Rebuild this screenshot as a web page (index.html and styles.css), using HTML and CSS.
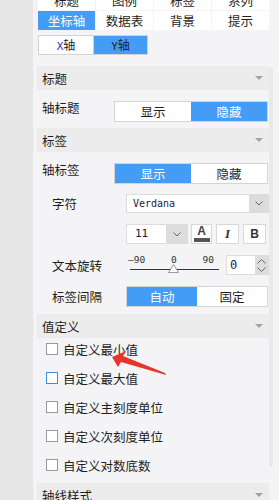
FILE: index.html
```html
<!DOCTYPE html>
<html>
  <head>
    <meta charset="UTF-8">
    <title>坐标轴设置</title>
    <link rel="stylesheet" href="styles.css">
  </head>
  <body>
    <div class="app">
      <div class="side"></div>
      <div class="panel">
        <div class="tabs">
          <span class="tab">标题</span>
          <span class="tab">图例</span>
          <span class="tab">标签</span>
          <span class="tab">系列</span>
          <span class="tab active">坐标轴</span>
          <span class="tab">数据表</span>
          <span class="tab">背景</span>
          <span class="tab">提示</span>
        </div>
        <div class="axis-switch">
          <span class="axis"><b class="latin x">X</b>轴</span>
          <span class="axis on"><b class="latin">Y</b>轴</span>
        </div>

        <div class="group-head">标题<i class="caret"></i></div>
        <div class="row top">
          <span class="label">轴标题</span>
          <div class="toggle">
            <span>显示</span>
            <span class="on">隐藏</span>
          </div>
        </div>

        <div class="group-head tight">标签<i class="caret"></i></div>
        <div class="row top">
          <span class="label">轴标签</span>
          <div class="toggle">
            <span class="on">显示</span>
            <span>隐藏</span>
          </div>
        </div>
        <div class="row sub">
          <span class="label">字符</span>
          <div class="select wide">
            <span class="value latin">Verdana</span>
            <span class="arrow"><svg width="8" height="5" viewBox="0 0 8 5"><path d="M0.5 0.5 L4 4 L7.5 0.5" fill="none" stroke="#666" stroke-width="1"/></svg></span>
          </div>
        </div>
        <div class="row sub">
          <span class="label"></span>
          <div class="select size">
            <span class="value latin">11</span>
            <span class="arrow"><svg width="8" height="5" viewBox="0 0 8 5"><path d="M0.5 0.5 L4 4 L7.5 0.5" fill="none" stroke="#666" stroke-width="1"/></svg></span>
          </div>
          <span class="tool color"><span class="a">A</span><span class="bar"></span></span>
          <span class="tool italic">I</span>
          <span class="tool bold">B</span>
        </div>
        <div class="row sub">
          <span class="label">文本旋转</span>
          <div class="slider">
            <div class="ticks"><span>‒90</span><span>0</span><span>90</span></div>
            <div class="line"></div>
            <svg class="thumb" width="11" height="9" viewBox="0 0 11 9"><polygon points="5.5,0.5 10.5,8.5 0.5,8.5" fill="#fff" stroke="#999"/></svg>
          </div>
          <div class="number">
            <span class="value latin">0</span>
            <span class="spin">
              <svg width="9" height="5" viewBox="0 0 9 5"><path d="M0.5 4.5 L4.5 0.5 L8.5 4.5" fill="none" stroke="#666"/></svg>
              <svg width="9" height="5" viewBox="0 0 9 5"><path d="M0.5 0.5 L4.5 4.5 L8.5 0.5" fill="none" stroke="#666"/></svg>
            </span>
          </div>
        </div>
        <div class="row sub">
          <span class="label">标签间隔</span>
          <div class="toggle long">
            <span class="on">自动</span>
            <span>固定</span>
          </div>
        </div>

        <div class="group-head value-head">值定义<i class="caret"></i></div>
        <div class="checks">
          <label class="check"><span class="box"></span>自定义最小值</label>
          <label class="check"><span class="box focus"></span>自定义最大值</label>
          <label class="check"><span class="box"></span>自定义主刻度单位</label>
          <label class="check"><span class="box"></span>自定义次刻度单位</label>
          <label class="check"><span class="box"></span>自定义对数底数</label>
        </div>

        <div class="group-head last">轴线样式<i class="caret"></i></div>
      </div>
      <div class="scroll"><div class="scroll-thumb"></div></div>

      <svg class="pointer" width="56" height="28" viewBox="0 0 56 28">
        <polygon points="0,6 14,0 11,5 53,22 54,24 9,11 6,16" fill="#e8352c"/>
      </svg>
    </div>
  </body>
</html>
```

FILE: styles.css
```css
html, body {
  margin: 0;
  padding: 0;
}
body {
  font-family: "Noto Sans CJK SC", "Noto Sans", sans-serif;
  font-size: 12px;
  color: #1e1e1e;
}
.app {
  position: relative;
  display: flex;
  width: 279px;
  height: 500px;
  overflow: hidden;
  background: #f4f4f6;
}
.side {
  width: 33px;
  flex: none;
  background: #e6e6e6;
}
.panel {
  width: 232px;
  flex: none;
  padding-left: 4px;
}
.scroll {
  width: 10px;
  flex: none;
}
.scroll-thumb {
  width: 4px;
  height: 400px;
  margin-top: 67px;
  border-radius: 2px;
  background: #e9e9eb;
}
.latin {
  font-family: "DejaVu Sans Mono", "Liberation Mono", monospace;
  font-weight: normal;
}

/* tabs */
.tabs {
  display: grid;
  grid-template-columns: repeat(4, 57px);
  grid-auto-rows: 19px;
  gap: 1px;
  margin: -9px 0 0 1px;
}
.tab {
  background: #fff;
  text-align: center;
  line-height: 19px;
  font-size: 12.5px;
}
.tab.active {
  background: #439cf5;
  color: #fff;
}
.axis-switch {
  display: flex;
  margin: 5px 0 0 1px;
}
.axis {
  width: 54px;
  height: 18px;
  line-height: 18px;
  text-align: center;
  border: 1px solid #d2d2d2;
  background: #fff;
}
.axis + .axis {
  width: 53px;
  border-left: none;
}
.axis.on {
  background: #439cf5;
}
.axis .latin {
  font-size: 11px;
}
.axis .x {
  color: #3a2ad0;
}

/* group headers */
.group-head {
  display: flex;
  align-items: center;
  justify-content: space-between;
  height: 24px;
  margin-top: 11px;
  padding: 0 6px 0 5px;
  background: #ececec;
  font-size: 12.5px;
}
.group-head.tight {
  margin-top: 6px;
}
.group-head.value-head {
  margin-top: 7px;
}
.group-head.last {
  margin-top: 12px;
}
.caret {
  width: 0;
  height: 0;
  border-left: 4px solid transparent;
  border-right: 4px solid transparent;
  border-top: 4px solid #a3a3a3;
}

/* rows */
.row {
  display: flex;
  align-items: center;
  margin-top: 11px;
}
.row.top {
  align-items: flex-start;
  margin-top: 11px;
  padding-left: 5px;
}
.row.top + .row.sub {
  margin-top: 10px;
}
.row.top .label {
  width: 72px;
  line-height: 12px;
  padding-top: 1px;
  font-size: 12.5px;
}
.row.sub {
  padding-left: 15px;
}
.row.sub .label {
  width: 74px;
  flex: none;
  font-size: 12.5px;
}
.toggle {
  display: flex;
  width: 152px;
  height: 19px;
  border: 1px solid #d4d4d4;
  background: #fff;
}
.toggle span {
  flex: 1;
  text-align: center;
  line-height: 19px;
  font-size: 12.5px;
}
.toggle .on {
  background: #439cf5;
  color: #fff;
}
.toggle.long {
  width: 140px;
}

/* selects */
.select {
  display: flex;
  height: 17px;
  border: 1px solid #dcdcdc;
  background: #fff;
}
.select.wide {
  width: 141px;
}
.select.size {
  width: 60px;
  height: 18px;
}
.select .value {
  flex: 1;
  padding-left: 6px;
  line-height: 17px;
  font-size: 10px;
  color: #1a1a40;
}
.select.size .value {
  line-height: 18px;
  padding-left: 8px;
  font-size: 11px;
}
.select .arrow {
  display: flex;
  align-items: center;
  justify-content: center;
  width: 19px;
  background: #dcdcdc;
}
.select.size .arrow {
  width: 21px;
}
.tool {
  display: flex;
  flex-direction: column;
  align-items: center;
  justify-content: center;
  width: 19px;
  height: 18px;
  border: 1px solid #d8d8d8;
  background: #fff;
  margin-left: 4px;
}
.tool.color {
  margin-left: 3px;
  justify-content: flex-end;
}
.tool .a {
  font-family: "Liberation Sans", sans-serif;
  font-weight: bold;
  font-size: 12px;
  line-height: 11px;
  color: #444;
}
.tool .bar {
  width: 16px;
  height: 4px;
  margin: 1px 0 1px;
  background: #555;
}
.tool.italic {
  width: 21px;
  font-family: "Liberation Serif", serif;
  font-style: italic;
  font-weight: bold;
  font-size: 13px;
  color: #333;
}
.tool.bold {
  width: 21px;
  font-family: "Liberation Sans", sans-serif;
  font-weight: bold;
  font-size: 12px;
  color: #333;
}

/* slider */
.slider {
  position: relative;
  width: 91px;
  height: 20px;
  margin-left: 2px;
}
.ticks {
  display: flex;
  justify-content: space-between;
  padding-right: 5px;
  font-family: "DejaVu Sans Mono", monospace;
  font-size: 9.5px;
  line-height: 10px;
  color: #333;
}
.line {
  height: 1px;
  margin: 4px 0 0 2px;
  background: #333;
}
.thumb {
  position: absolute;
  left: 40px;
  top: 9px;
}
.number {
  display: flex;
  width: 41px;
  height: 18px;
  margin-left: 7px;
  border: 1px solid #dcdcdc;
  background: #fff;
}
.number .value {
  flex: 1;
  padding-left: 3px;
  line-height: 18px;
  font-size: 12px;
  color: #1a1a60;
}
.spin {
  display: flex;
  flex-direction: column;
  align-items: center;
  justify-content: center;
  gap: 3px;
  width: 13px;
  background: #dcdcdc;
}

/* checkboxes */
.checks {
  display: flex;
  flex-direction: column;
  gap: 17px;
  padding: 5px 0 0 9px;
}
.check {
  display: flex;
  align-items: center;
  height: 12px;
  font-size: 12.5px;
}
.box {
  width: 10px;
  height: 10px;
  margin-right: 5px;
  border: 1px solid #9a9a9a;
  background: #fff;
}
.box.focus {
  border-color: #3a8fe4;
}

.pointer {
  position: absolute;
  left: 112px;
  top: 351px;
}
```
